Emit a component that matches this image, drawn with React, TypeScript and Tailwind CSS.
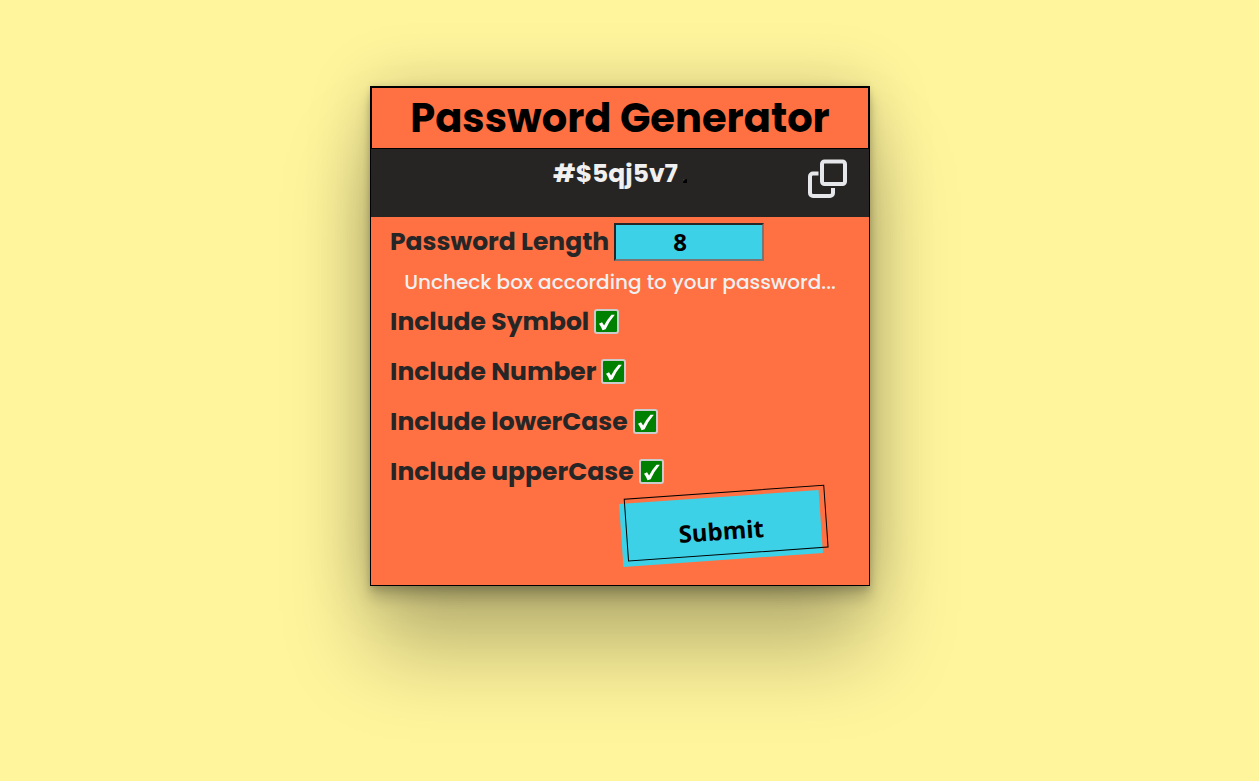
import { useState } from "react";

const OPTIONS = [
  { id: "symbol", label: "Include Symbol" },
  { id: "number", label: "Include Number" },
  { id: "lower", label: "Include lowerCase" },
  { id: "upper", label: "Include upperCase" },
];

const POOLS: Record<string, string> = {
  symbol: "!@#$%^&*",
  number: "0123456789",
  lower: "abcdefghijklmnopqrstuvwxyz",
  upper: "ABCDEFGHIJKLMNOPQRSTUVWXYZ",
};

function CopyIcon() {
  return (
    <svg viewBox="0 0 40 40" className="size-10" fill="none" stroke="#e6e7ea" strokeWidth="4" aria-hidden="true">
      <rect x="14" y="2.500" width="23" height="22.500" rx="2.500" />
      <path d="M10.500 14.500H5a3 3 0 0 0-3 3v16.500a3 3 0 0 0 3 3h17a3 3 0 0 0 3-3v-5" />
    </svg>
  );
}

function Option({ id, label, checked, onToggle }: { id: string; label: string; checked: boolean; onToggle: () => void }) {
  return (
    <div className="flex h-[50px] items-start gap-[5px]">
      <label htmlFor={id} className="text-[25px] leading-[26px] font-bold text-[#262626]">{label}</label>
      <span className="relative size-[25px]">
        <input
          id={id}
          type="checkbox"
          checked={checked}
          onChange={onToggle}
          className="peer block size-full appearance-none rounded-[3px] border-2 border-[#cccccc] bg-white checked:bg-[#008000]"
        />
        <svg viewBox="0 0 25 25" className="pointer-events-none absolute inset-0 hidden size-full peer-checked:block" fill="white" aria-hidden="true">
          <path d="M5 14.800 8 13.300 10.100 16.600Q13 10.500 17.500 5.700L20.800 5.700Q15 12.500 11.600 20.200L8.500 21.200Q7 17.500 5 14.800Z" />
        </svg>
      </span>
    </div>
  );
}

export default function App() {
  const [password, setPassword] = useState("#$5qj5v7");
  const [length, setLength] = useState("8");
  const [enabled, setEnabled] = useState<Record<string, boolean>>({ symbol: true, number: true, lower: true, upper: true });

  const generate = () => {
    const pool = OPTIONS.filter((o) => enabled[o.id]).map((o) => POOLS[o.id]).join("");
    if (!pool) return;
    setPassword(Array.from({ length: Number(length) || 8 }, () => pool[Math.floor(Math.random() * pool.length)]).join(""));
  };

  return (
    <div className="flex min-h-screen items-start justify-center bg-[#fff59d] pt-[86px] pr-[19px] font-['Poppins','Inter',sans-serif]">
      <main className="flex min-h-[500px] w-full max-w-[500px] flex-col border border-black bg-[#ff7043] shadow-[0_66px_80px_rgba(0,0,0,0.25),0_0_60px_rgba(0,0,0,0.18),0_4px_6px_rgba(0,0,0,0.12),0_12px_13px_rgba(0,0,0,0.17),0_-3px_5px_rgba(0,0,0,0.05)]">
        <h1 className="border border-black text-center text-[40px] leading-[60px] font-bold text-black">Password Generator</h1>
        <div className="grid h-[68px] grid-cols-[1fr_auto_1fr] items-start bg-[#262524] pt-2.5 pr-[21px] pl-[21px]">
          <span />
          <div className="flex items-start gap-[5px]">
            <output className="text-[25px] leading-[30px] font-bold text-[#f0f0f0]">{password}</output>
            <span className="mt-5 size-1 bg-linear-to-br from-[#555555] to-black to-60%" />
          </div>
          <button type="button" aria-label="Copy password" className="justify-self-end" onClick={() => navigator.clipboard?.writeText(password)}>
            <CopyIcon />
          </button>
        </div>
        <div className="px-[19px] pt-1.5">
          <div className="flex items-center gap-[5px]">
            <label htmlFor="length" className="text-[25px] leading-7 font-bold text-[#262626]">Password Length</label>
            <input
              id="length"
              value={length}
              onChange={(e) => setLength(e.target.value)}
              className="h-[38px] w-[150px] rounded-none border-2 border-t-[#262626] border-r-[#767676] border-b-[#767676] border-l-[#262626] bg-[#3dd1e7] pr-[18px] pb-0.5 text-center font-['Open_Sans',sans-serif] text-2xl font-bold text-black"
            />
          </div>
          <p className="mt-1.5 text-center text-xl leading-[30px] font-medium text-[#f0f0f0]">Uncheck box according to your password...</p>
          <div className="mt-3">
            {OPTIONS.map((o) => (
              <Option key={o.id} {...o} checked={enabled[o.id]} onToggle={() => setEnabled({ ...enabled, [o.id]: !enabled[o.id] })} />
            ))}
          </div>
        </div>
        <button
          type="button"
          onClick={generate}
          className="relative mr-12 -mt-3 h-[63px] w-[200px] -rotate-4 self-end bg-[#3dd1e7] pt-1 font-['Open_Sans',sans-serif] text-2xl font-bold text-black"
        >
          Submit
          <span className="absolute -top-[5px] -right-[6px] bottom-[5px] left-[5px] border border-black" />
        </button>
      </main>
    </div>
  );
}
